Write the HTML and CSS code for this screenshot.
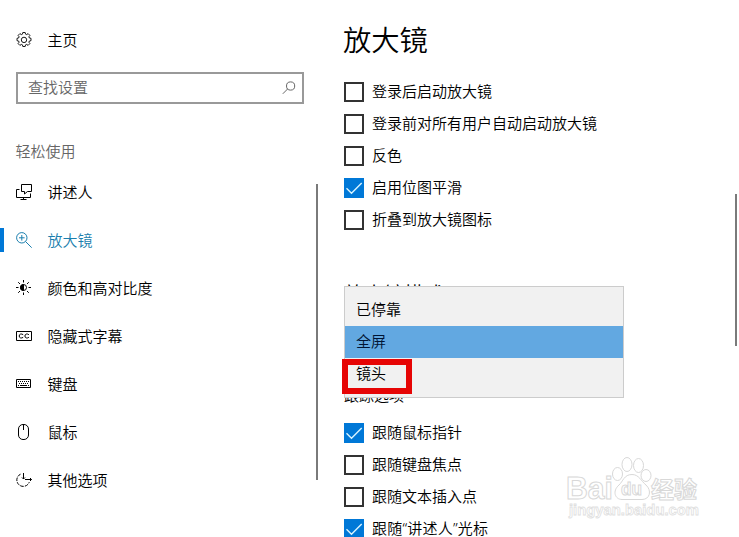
FILE: index.html
```html
<!DOCTYPE html>
<html lang="zh-CN">
<head>
<meta charset="utf-8">
<title>放大镜</title>
<link rel="stylesheet" href="styles.css">
</head>
<body>
<div class="window">
  <aside class="sidebar">
    <div class="nav-item home">
      <svg class="icon gear" viewBox="0 0 16 16"><path d="M6.800.5h2.400l.3 1.600 1.200.5 1.400-1 1.800 1.800-1 1.400.5 1.200 1.600.3v2.400l-1.600.3-.5 1.200 1 1.400-1.800 1.800-1.400-1-1.200.5-.3 1.600H6.800l-.3-1.600-1.200-.5-1.400 1-1.800-1.800 1-1.400-.5-1.200-1.600-.3V6.300L2.600 6l.5-1.200-1-1.400 1.800-1.800 1.400 1 1.200-.5z"/><circle cx="8" cy="7.900" r="2.700"/></svg>
      <span>主页</span>
    </div>
    <div class="search">
      <span>查找设置</span>
      <svg class="search-icon" viewBox="0 0 14 14"><circle cx="8.600" cy="5" r="4.100"/><path d="M5.700 7.900L.8 12.800"/></svg>
    </div>
    <div class="category">轻松使用</div>
    <nav class="nav">
      <div class="nav-item">
        <svg class="icon" viewBox="0 0 16 16"><path d="M5.500.5h10v7h-4l-3 2.500V7.500h-3zM3.500 5.500h-3v8h14V9.500M7.500 13.500v2M4.500 15.500h6"/></svg>
        <span>讲述人</span>
      </div>
      <div class="nav-item active">
        <svg class="icon" viewBox="0 0 16 16"><circle cx="5.800" cy="5.800" r="5.200"/><path d="M9.500 9.500l6.200 6.200M3 5.800h5.600M5.800 3v5.600"/></svg>
        <span>放大镜</span>
      </div>
      <div class="nav-item">
        <svg class="icon" viewBox="0 0 16 16"><circle cx="7.500" cy="7.500" r="3"/><path class="solid" d="M7.500 4.500a3 3 0 0 0 0 6z"/><path d="M7.500 0v2.500M7.500 12.500V15M0 7.500h2.500M12.500 7.500H15M2.200 2.200L4 4M11 11l1.800 1.800M12.800 2.200L11 4M4 11l-1.800 1.800"/></svg>
        <span>颜色和高对比度</span>
      </div>
      <div class="nav-item">
        <svg class="icon" viewBox="0 0 16 16"><path d="M.5 3.500h15v9H.5zM7.200 6.700C5.500 5.400 3.200 5.900 3.200 8s2.300 2.600 4 1.300M12.900 6.700C11.200 5.400 8.900 5.900 8.900 8s2.300 2.600 4 1.300"/></svg>
        <span>隐藏式字幕</span>
      </div>
      <div class="nav-item">
        <svg class="icon" viewBox="0 0 16 16"><path d="M.5 3.500h14v8H.5zM4 9.500h7"/><path class="keys" d="M2 5.500h11M3 7.500h10M2 9.500h1M12 9.500h1"/></svg>
        <span>键盘</span>
      </div>
      <div class="nav-item">
        <svg class="icon" viewBox="0 0 16 16"><rect x="2.500" y=".5" width="10" height="15" rx="4.500"/><path d="M7.500 1v5"/></svg>
        <span>鼠标</span>
      </div>
      <div class="nav-item">
        <svg class="icon" viewBox="0 0 16 16"><path d="M7.500 1v6M6 5.500l1.500 1.500L9 5.500M9 7.500h6.500M14 6l1.500 1.500L14 9"/><path class="dashed" d="M4.500 2.200A6.400 6.400 0 1 0 13.300 10"/></svg>
        <span>其他选项</span>
      </div>
    </nav>
  </aside>
  <main class="content">
    <h1>放大镜</h1>
    <div class="options">
      <div class="option"><i class="box"></i><span>登录后启动放大镜</span></div>
      <div class="option"><i class="box"></i><span>登录前对所有用户自动启动放大镜</span></div>
      <div class="option"><i class="box"></i><span>反色</span></div>
      <div class="option"><i class="box checked"><svg viewBox="0 0 20 20"><path d="M2.500 10.300l5 5L17.700 5"/></svg></i><span>启用位图平滑</span></div>
      <div class="option"><i class="box"></i><span>折叠到放大镜图标</span></div>
    </div>
    <section class="mode">
      <h2>放大镜模式</h2>
      <div class="label">跟踪选项</div>
      <div class="dropdown">
        <div class="choice">已停靠</div>
        <div class="choice selected">全屏</div>
        <div class="choice">镜头</div>
        <div class="marker"></div>
      </div>
    </section>
    <div class="options">
      <div class="option"><i class="box checked"><svg viewBox="0 0 20 20"><path d="M2.500 10.300l5 5L17.700 5"/></svg></i><span>跟随鼠标指针</span></div>
      <div class="option"><i class="box"></i><span>跟随键盘焦点</span></div>
      <div class="option"><i class="box"></i><span>跟随文本插入点</span></div>
      <div class="option"><i class="box checked"><svg viewBox="0 0 20 20"><path d="M2.500 10.300l5 5L17.700 5"/></svg></i><span class="latin-quotes">跟随“讲述人”光标</span></div>
    </div>
  </main>
  <div class="page-scroll"></div>
  <svg class="watermark" viewBox="0 0 140 70">
    <text class="brand" x="-1" y="46" textLength="47" lengthAdjust="spacingAndGlyphs">Bai</text>
    <ellipse cx="50.500" cy="21" rx="5" ry="6.500"/>
    <ellipse cx="60" cy="11.500" rx="5" ry="7"/>
    <ellipse cx="71.500" cy="12.500" rx="5" ry="7"/>
    <ellipse cx="79" cy="22.500" rx="5" ry="6"/>
    <path d="M65 21.500c-8 0-9 7-13 10.500-7 6-4 14.500 3 14.500h20c8 0 10-9 4-14.500-5-4-7-10.500-14-10.500z"/>
    <text class="du" x="54" y="42" textLength="21" lengthAdjust="spacingAndGlyphs">du</text>
    <text class="cjk" x="84" y="45" textLength="46">经验</text>
    <text class="url" x="2" y="62" textLength="130" lengthAdjust="spacingAndGlyphs">jingyan.baidu.com</text>
  </svg>
</div>
</body>
</html>
```
FILE: styles.css
```css
* { box-sizing: border-box; }

body {
  margin: 0;
  background: #fff;
  color: #000;
  font: 15px/20px "Noto Sans CJK SC", sans-serif;
  font-weight: 350;
}

.window {
  position: relative;
  display: flex;
  width: 739px;
  height: 537px;
  overflow: hidden;
}

.sidebar {
  flex: none;
  width: 318px;
  padding-top: 16px;
}

.nav-item {
  display: flex;
  align-items: center;
  gap: 15.500px;
  height: 48px;
  padding-left: 16px;
}

.nav-item span { white-space: nowrap; }

.icon {
  width: 16px;
  height: 16px;
  fill: none;
  stroke: currentColor;
  stroke-width: 1;
}

.gear { stroke-width: .9; }
.icon .solid { fill: currentColor; }
.icon .keys { stroke-dasharray: 1 1; }
.icon .dashed { stroke-dasharray: 3.500 1.200; }

.search {
  display: flex;
  align-items: center;
  justify-content: space-between;
  width: 288px;
  height: 32px;
  margin: 8px 0 0 16px;
  padding: 0 6px 0 10px;
  border: 2px solid #999;
  color: #666;
}

.search span { padding-bottom: 2px; }

.search-icon {
  width: 14px;
  height: 14px;
  fill: none;
  stroke: #666;
}

.category {
  height: 64px;
  padding: 37px 0 0 15.500px;
  color: #666;
}

.nav {
  position: relative;
}

.nav::after {
  content: "";
  position: absolute;
  top: 16px;
  right: 0;
  width: 2px;
  height: 296px;
  background: #7a7a7a;
}

.active {
  padding-left: 12px;
  border-left: 4px solid #0078d7;
  border-image: linear-gradient(transparent 12px, #0078d7 12px, #0078d7 36px, transparent 36px) 0 0 0 4;
  color: #1b7fae;
}

.content {
  width: 395px;
  padding: 19px 0 0 26px;
}

h1 {
  height: 57px;
  margin: 0 0 0 -1px;
  font-size: 28.300px;
  font-weight: 350;
  line-height: 40px;
}

.option {
  display: flex;
  align-items: center;
  gap: 8px;
  height: 32px;
}

.option span {
  padding-bottom: 2px;
  white-space: nowrap;
}

.box {
  flex: none;
  width: 20px;
  height: 20px;
  border: 2px solid #333;
}

.checked {
  border: 0;
  background: #0078d7;
}

.checked svg {
  display: block;
  fill: none;
  stroke: #d8f4ff;
  stroke-width: 1.400;
}

.latin-quotes {
  font-family: "Noto Sans", "Noto Sans CJK SC", sans-serif;
  letter-spacing: .2px;
}

.mode {
  position: relative;
  height: 181px;
  padding-top: 43px;
}

h2 {
  height: 30px;
  margin: 0;
  font-size: 20px;
  font-weight: 350;
  line-height: 30px;
}

.label { margin-top: 76px; }

.dropdown {
  position: absolute;
  top: 50px;
  left: 0;
  width: 280px;
  height: 112px;
  padding: 7px 0;
  border: 1px solid #ccc;
  background: #f1f1f1;
}

.choice {
  height: 32px;
  padding-left: 11px;
  line-height: 30px;
}

.selected {
  background: #62a8e1;
  color: #001433;
}

.marker {
  position: absolute;
  top: 72px;
  left: -3px;
  width: 70px;
  height: 35px;
  border: 6px solid #e60505;
}

.page-scroll {
  position: absolute;
  top: 194px;
  right: 2px;
  width: 2px;
  height: 152px;
  background: #7a7a7a;
}

.watermark {
  position: absolute;
  top: 453px;
  left: 567px;
  width: 140px;
  height: 70px;
  overflow: visible;
  fill: #fff;
  stroke: #d8d8d8;
  stroke-width: 1;
}

.brand { font: bold 31px "Liberation Sans", sans-serif; }
.du { font: bold 18px "Liberation Sans", sans-serif; }
.cjk { font: bold 23px "Noto Sans CJK SC", sans-serif; }

.url {
  fill: #fff;
  stroke: #e0e0e0;
  stroke-width: .8;
  font: bold 15px "Liberation Sans", sans-serif;
}
```
